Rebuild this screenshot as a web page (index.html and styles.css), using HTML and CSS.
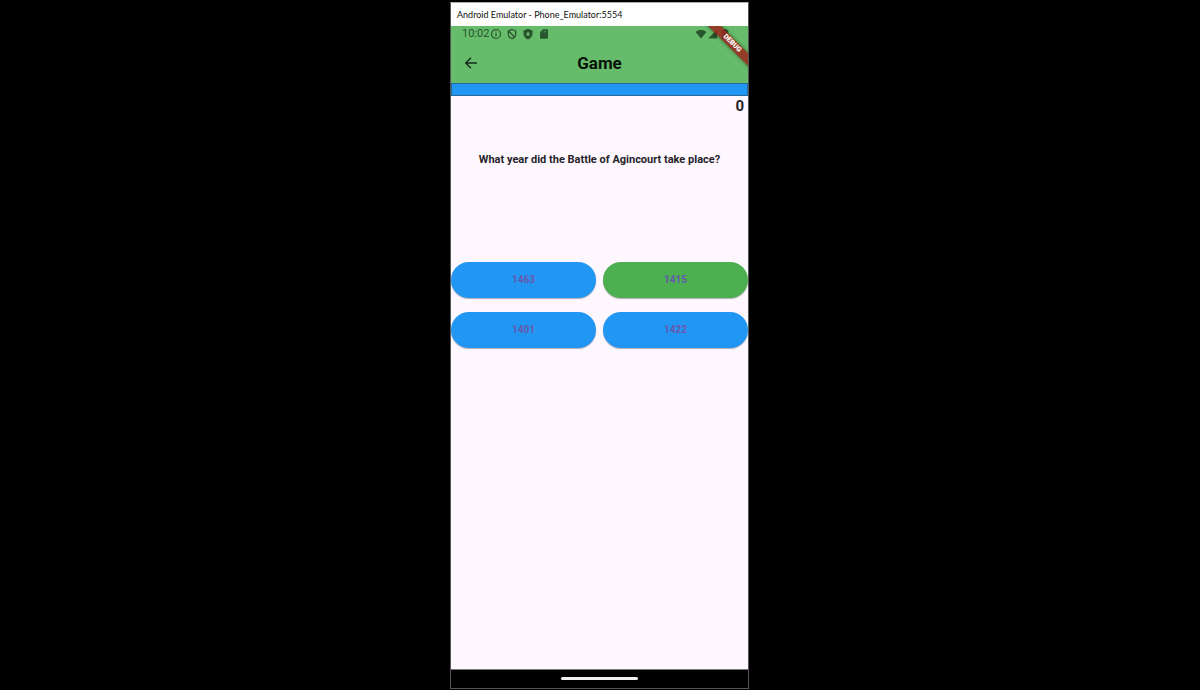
FILE: index.html
```html
<!DOCTYPE html>
<html lang="en">
<head>
<meta charset="utf-8">
<meta name="viewport" content="width=device-width, initial-scale=1">
<title>Game</title>
<link rel="stylesheet" href="styles.css">
</head>
<body>
<div class="desktop">
  <div class="emulator">
    <div class="window-title">Android Emulator - Phone_Emulator:5554</div>
    <header class="app-header">
      <div class="status-bar">
        <span class="clock">10:02</span>
        <svg class="status-icon" viewBox="0 0 12 12"><circle cx="6" cy="6" r="4.500" fill="none" stroke="currentColor" stroke-width="1.200"/><path d="M6 5.300v3.200M6 3.300v1.200" stroke="currentColor" stroke-width="1.200"/></svg>
        <svg class="status-icon" viewBox="0 0 12 12"><path d="M6 1.500 9.700 2.900v2.800C9.700 8.100 8.200 9.900 6 10.600 3.800 9.900 2.300 8.100 2.300 5.700V2.900ZM2.500 2.600l6 6.600" fill="none" stroke="currentColor" stroke-width="1.300"/></svg>
        <svg class="status-icon" viewBox="0 0 12 12"><path fill="currentColor" fill-rule="evenodd" d="M6 .8l4.500 1.700v3.300C10.500 8.500 8.600 10.600 6 11.400 3.400 10.600 1.500 8.500 1.500 5.800V2.500ZM6 4 4.600 5.200v2.200h2.800V5.200Z"/></svg>
        <svg class="status-icon" viewBox="0 0 12 12"><path fill="currentColor" fill-rule="evenodd" d="M5 1.200h4.200q.8 0 .8.800v8q0 .800-.8.800H2.900q-.8 0-.8-.8V4.100ZM4.400 3.300v1.300H5V3.300Zm1.600-.6v1.900h.5V2.700Zm1.600 0v1.900h.5V2.700Z"/></svg>
        <span class="signals">
          <svg class="status-icon" viewBox="0 0 12 12"><path fill="currentColor" d="M6 10.600.5 4Q6-.5 11.500 4Z"/></svg>
          <svg class="status-icon" viewBox="0 0 12 12"><path fill="currentColor" d="M10.200 1.500v9H1.200Z"/></svg>
          <svg class="status-icon" viewBox="0 0 12 12"><path fill="currentColor" d="M4.600 1h2.800v1h1.800v9H2.800V2h1.800Z"/></svg>
        </span>
      </div>
      <div class="app-bar">
        <button class="back" type="button" aria-label="Back"><svg viewBox="0 0 14 14"><path d="M13 7H2M7 1.700 1.700 7 7 12.300" fill="none" stroke="currentColor" stroke-width="1.400"/></svg></button>
        <h1 class="app-title">Game</h1>
      </div>
      <div class="ribbon-corner"><span class="ribbon">DEBUG</span></div>
    </header>
    <main class="game">
      <div class="timer"></div>
      <div class="score">0</div>
      <p class="question">What year did the Battle of Agincourt take place?</p>
      <div class="answers">
        <button class="answer" type="button">1463</button>
        <button class="answer correct" type="button">1415</button>
        <button class="answer" type="button">1401</button>
        <button class="answer" type="button">1422</button>
      </div>
    </main>
    <footer class="nav-bar"><div class="home-handle"></div></footer>
  </div>
</div>
</body>
</html>
```
FILE: styles.css
```css
* {
  box-sizing: border-box;
}

body {
  margin: 0;
  background: #000;
  font-family: Roboto, "Liberation Sans", sans-serif;
}

.desktop {
  display: grid;
  grid-template-columns: 450fr 299fr 451fr;
  min-height: 100vh;
  padding: 2px 0 1px;
}

.emulator {
  grid-column: 2;
  display: flex;
  flex-direction: column;
  border: 1px solid #555;
  border-top-color: #aaa;
}

.window-title {
  height: 23px;
  padding-left: 6px;
  background: #fff;
  color: #111;
  font: 9px/23px Lato, "Open Sans", sans-serif;
  white-space: nowrap;
}

.app-header {
  position: relative;
  background: #67bc6b;
}

.status-bar {
  display: flex;
  align-items: center;
  gap: 4px;
  height: 16px;
  padding: 0 17px 0 11px;
  color: #29552c;
}

.clock {
  width: 24px;
  font-size: 11px;
  line-height: 16px;
  white-space: nowrap;
}

.status-icon {
  flex: none;
  width: 12px;
  height: 12px;
}

.signals {
  display: flex;
  margin-left: auto;
}

.app-bar {
  display: grid;
  grid-template-columns: 40px 1fr 40px;
  align-items: center;
  height: 41px;
}

.back {
  display: grid;
  place-items: center;
  height: 40px;
  padding: 0;
  border: 0;
  background: none;
  color: #17291a;
}

.back svg {
  width: 14px;
  height: 14px;
}

.app-title {
  margin: 0;
  color: #071208;
  font-size: 17px;
  font-weight: 700;
  line-height: 24px;
  text-align: center;
}

/* Corner banner laid over the status icons */
.ribbon-corner {
  position: absolute;
  top: 0;
  right: 0;
  width: 48px;
  height: 48px;
  overflow: hidden;
  pointer-events: none;
}

.ribbon {
  position: absolute;
  top: 13px;
  left: -8px;
  width: 80px;
  background: rgb(158 38 29 / 85%);
  box-shadow: 0 0 4px rgb(0 0 0 / 50%);
  color: #fff;
  font-size: 7px;
  font-weight: 900;
  line-height: 9px;
  text-align: center;
  transform: rotate(45deg);
}

.game {
  flex: 1;
  background: #fef7ff;
  color: #26232a;
}

.timer {
  height: 13px;
  border: 1px solid #24699b;
  background: #2196f3;
}

.score {
  padding-right: 4px;
  font-size: 15px;
  font-weight: 700;
  line-height: 20px;
  text-align: right;
}

.question {
  height: 146px;
  margin: 0;
  padding-top: 36px;
  font-size: 11px;
  font-weight: 700;
  line-height: 16px;
  text-align: center;
}

.answers {
  display: grid;
  grid-template-columns: 1fr 1fr;
  gap: 14px 7px;
}

.answer {
  height: 36px;
  padding: 0;
  border: 0;
  border-radius: 18px;
  background: #2196f3;
  box-shadow: 0 1px 1px rgb(0 0 0 / 30%);
  color: #6659ad;
  font: 700 10px/16px Roboto, "Liberation Sans", sans-serif;
}

.correct {
  background: #4caf50;
}

.nav-bar {
  display: grid;
  place-items: center;
  height: 19px;
  padding-bottom: 2px;
  border-top: 1px solid #777;
  background: #000;
}

.home-handle {
  width: 26%;
  height: 3px;
  border-radius: 2px;
  background: #f1f1f1;
}
```
